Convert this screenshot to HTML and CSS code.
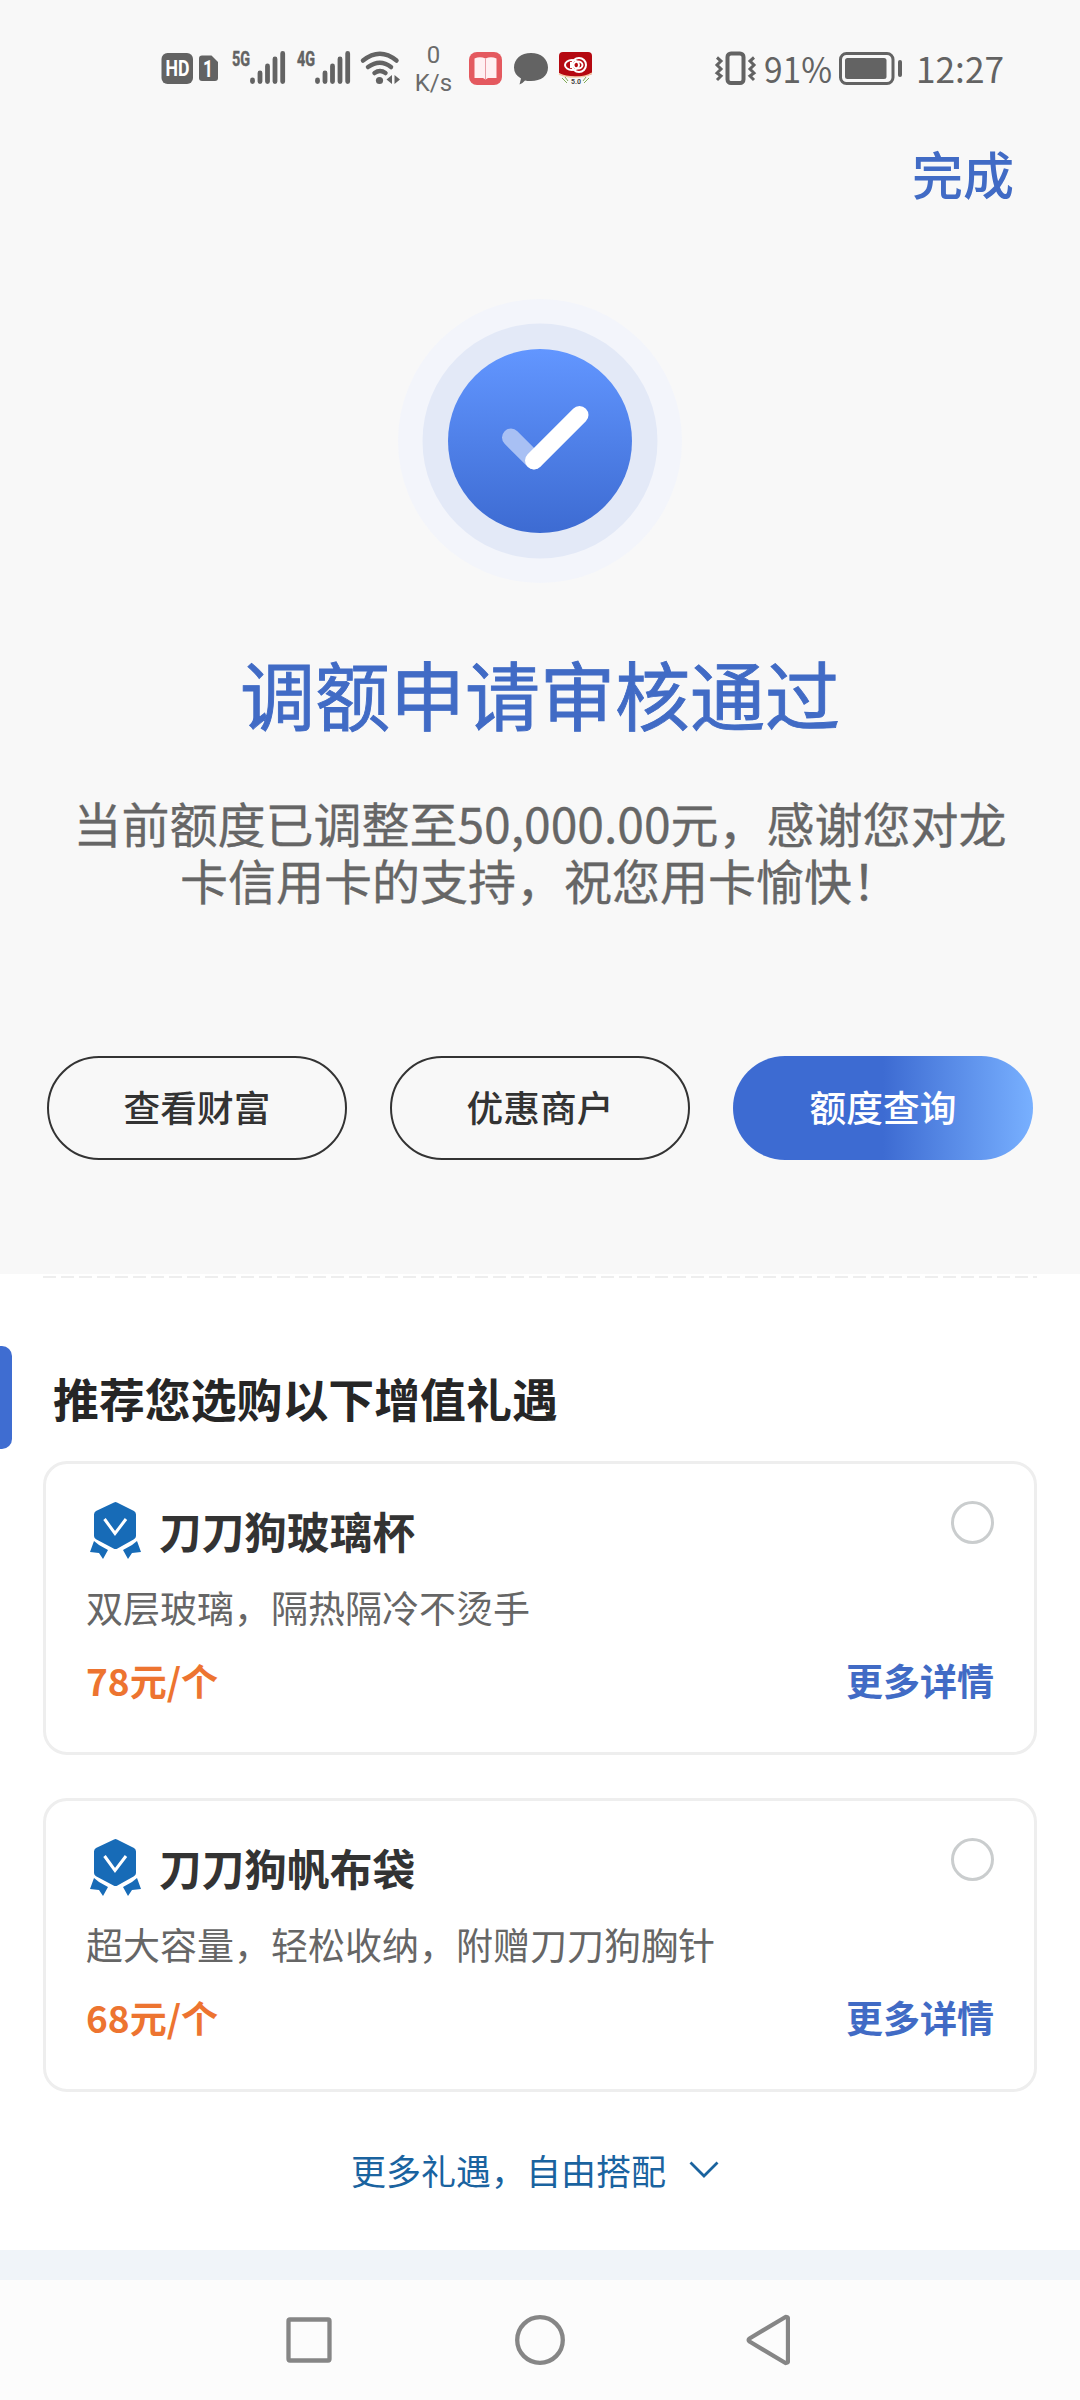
FILE: index.html
```html
<!DOCTYPE html>
<html lang="zh-CN">
<head>
<meta charset="utf-8">
<title>调额申请</title>
<link rel="stylesheet" href="styles.css">
</head>
<body>
<svg width="0" height="0" class="defs">
  <symbol id="medal" viewBox="0 0 51 57">
    <path d="M4 39L9 43L18 48L13 57L9 51L0 50ZM47 39L42 43L33 48L38 57L42 51L51 50Z" fill="#176bb7"/>
    <path d="M24 .5Q25.500 -.3 27 .5L44 9Q46 10 46 12.500V34Q46 36 44 37.300L27.500 46.500Q25.500 47.500 23.500 46.500L6 37.300Q4 36 4 34V12.500Q4 10 6 9Z" fill="#176bb7"/>
    <path d="M14.500 17L25 31.500L36 17" fill="none" stroke="#fff" stroke-width="3"/>
  </symbol>
</svg>
<header class="statusbar">
  <svg class="st-left" width="240" height="60" viewBox="160 38 240 60" fill="#636363">
    <rect x="161.500" y="53" width="31.500" height="31" rx="6"/>
    <text x="165.500" y="76" class="hd" textLength="24" lengthAdjust="spacingAndGlyphs">HD</text>
    <path d="M202 55.500H211.500L218 62V78Q218 81 215 81H202Q199 81 199 78V58.500Q199 55.500 202 55.500Z"/>
    <text x="203" y="77" class="sim" textLength="10" lengthAdjust="spacingAndGlyphs">1</text>
    <text x="232" y="66" class="gen" textLength="18" lengthAdjust="spacingAndGlyphs">5G</text>
    <text x="297" y="66" class="gen" textLength="18" lengthAdjust="spacingAndGlyphs">4G</text>
    <g stroke="#636363" stroke-width="4.800" stroke-linecap="round">
      <path d="M252.500 80V81.500M260 73V81.500M267.500 66V81.500M275 59V81.500M282.700 53.500V81.500"/>
      <path d="M317.500 80V81.500M325 73V81.500M332.500 66V81.500M340 59V81.500M347.700 53.500V81.500"/>
    </g>
    <g fill="none" stroke="#636363" stroke-width="4.500" stroke-linecap="round">
      <path d="M363 60.500Q380 47 396.500 60.500M368 67Q380 58.500 391 67M374.500 73Q380 69 385.500 73"/>
    </g>
    <circle cx="379.500" cy="80.500" r="3.600"/>
    <path d="M392 75V84L386.500 79.500ZM394.500 75V84L400 79.500Z"/>
  </svg>
  <div class="speed"><span>0</span><span>K/s</span></div>
  <svg class="st-apps" width="124" height="44" viewBox="468 46 124 44">
    <rect x="469" y="52" width="33" height="33" rx="8" fill="#e4595f"/>
    <path d="M474.500 58.500Q480 56 485.500 58.500Q491 56 496.500 58.500V78H488L485.500 79.500L483 78H474.500Z" fill="#fff0f2"/>
    <path d="M485.500 58.500V79" stroke="#e99ba4" stroke-width="1"/>
    <path d="M531 53C541 53 548 59 548 67.500S541 81 531 81Q527 81 525 80.500Q523 83 519.500 84.500L521 78.500Q514 74.500 514 67.500C514 59 521 53 531 53Z" fill="#636363"/>
    <path d="M563 52H588Q592 52 592 56V74Q586 77 575 77Q564 77 559 73V56Q559 52 563 52Z" fill="#b50911"/>
    <g fill="none" stroke="#fff" stroke-width="2"><ellipse cx="572" cy="65" rx="7" ry="5"/><circle cx="579" cy="65" r="7"/><ellipse cx="578" cy="65" rx="4.500" ry="3.500"/><path d="M571 62V68"/></g>
    <path d="M559 74Q565 77 575 77Q586 77 592 73" stroke="#f2c9a5" stroke-width="1.500" fill="none"/>
    <text x="571" y="84" class="ver">5.0</text>
    <path d="M562 78L567 83M565 77L568 81M589 78L584 83M586 77L583 81" stroke="#7faa55"/>
  </svg>
  <svg class="st-right" width="292" height="80" viewBox="714 28 292 80" fill="#636363">
    <rect x="727.500" y="53.500" width="16" height="29.500" rx="3.500" fill="none" stroke="#636363" stroke-width="4"/>
    <path d="M717 57.500L721 61L717 65L721 69L717 73L721 76L717 80M754 57.500L750 61L754 65L750 69L754 73L750 76L754 80" fill="none" stroke="#636363" stroke-width="3"/>
    <text x="764" y="83" class="num" textLength="68" lengthAdjust="spacingAndGlyphs">91%</text>
    <rect x="840.500" y="53.500" width="52.500" height="30" rx="6" fill="none" stroke="#636363" stroke-width="3"/>
    <rect x="845" y="58" width="41.500" height="21" rx="2.500"/>
    <rect x="898" y="60" width="4" height="17" rx="2"/>
    <text x="916" y="83" class="num" textLength="88" lengthAdjust="spacingAndGlyphs">12:27</text>
  </svg>
</header>

<main>
  <section class="result">
    <div class="topbar"><a class="done">完成</a></div>
    <svg class="success" width="284" height="284" viewBox="-142 -142 284 284">
      <defs><linearGradient id="blue" x1="0" y1="0" x2="0" y2="1"><stop offset="0" stop-color="#6296ff"/><stop offset="1" stop-color="#3d6bd2"/></linearGradient></defs>
      <circle r="142" fill="#f3f5fb"/>
      <circle r="117.500" fill="#e3e9f7"/>
      <circle r="92" fill="url(#blue)"/>
      <path d="M-29 -3.500L-6 19.500" stroke="#a8c0f4" stroke-width="18" stroke-linecap="round"/>
      <path d="M-6 19.500L39.500 -26" stroke="#fff" stroke-width="18" stroke-linecap="round"/>
    </svg>
    <h1>调额申请审核通过</h1>
    <p class="message">当前额度已调整至50,000.00元，感谢您对龙<br>卡信用卡的支持，祝您用卡愉快！</p>
    <div class="actions">
      <button class="btn">查看财富</button>
      <button class="btn">优惠商户</button>
      <button class="btn primary">额度查询</button>
    </div>
  </section>

  <section class="offers">
    <div class="divider"></div>
    <div class="heading">
      <span class="marker"></span>
      <h2>推荐您选购以下增值礼遇</h2>
    </div>
    <div class="cards">
      <article class="card">
        <div class="card-head">
          <svg class="medal"><use href="#medal"/></svg>
          <h3>刀刀狗玻璃杯</h3>
          <span class="radio"></span>
        </div>
        <p class="desc">双层玻璃，隔热隔冷不烫手</p>
        <div class="card-foot"><span class="price">78元/个</span><a class="detail">更多详情</a></div>
      </article>
      <article class="card">
        <div class="card-head">
          <svg class="medal"><use href="#medal"/></svg>
          <h3>刀刀狗帆布袋</h3>
          <span class="radio"></span>
        </div>
        <p class="desc">超大容量，轻松收纳，附赠刀刀狗胸针</p>
        <div class="card-foot"><span class="price">68元/个</span><a class="detail">更多详情</a></div>
      </article>
    </div>
    <a class="more">更多礼遇，自由搭配
      <svg width="30" height="18" viewBox="0 0 30 18"><path d="M1.500 1.500L15 15L28.500 1.500" fill="none" stroke="#1a639f" stroke-width="2.800"/></svg>
    </a>
  </section>
</main>

<nav class="navbar">
  <svg width="504" height="52" viewBox="286 2314 504 52" fill="none" stroke="#868686" stroke-width="4.300">
    <rect x="288.500" y="2319.500" width="41" height="41" rx="1.500"/>
    <circle cx="540" cy="2340" r="22.800"/>
    <path d="M785.500 2317L749.500 2338.500Q748 2340 749.500 2341.500L785.500 2363Q788 2363 788 2361V2319Q788 2317 785.500 2317Z" stroke-linejoin="round"/>
  </svg>
</nav>
</body>
</html>
```
FILE: styles.css
```css
* { box-sizing: border-box; margin: 0; padding: 0; }
body {
  width: 1080px;
  height: 2400px;
  display: flex;
  flex-direction: column;
  background: #fff;
  font-family: "Noto Sans CJK SC", sans-serif;
  overflow: hidden;
}
svg { display: block; flex: none; }
.defs { position: absolute; }

.statusbar {
  height: 136px;
  flex: none;
  display: flex;
  align-items: center;
  padding-left: 160px;
  background: #f8f8f8;
}
.speed {
  width: 67px;
  display: flex;
  flex-direction: column;
  padding-top: 2px;
  text-align: center;
  font: 24px/28px Roboto, sans-serif;
  color: #6b6b6b;
}
.st-apps { margin-left: 1px; }
.st-right { margin-left: 122px; }
.hd { font: 700 22px Roboto, sans-serif; fill: #fff; }
.sim { font: 700 23px Roboto, sans-serif; fill: #fff; }
.gen { font: 700 20px Roboto, sans-serif; stroke: #636363; stroke-width: .5px; }
.ver { font: 700 7px Roboto, sans-serif; fill: #444; }
.num { font: 36px "Noto Sans CJK SC", sans-serif; }

main { flex: none; }
.result {
  height: 1138px;
  background: #f8f8f8;
  display: flex;
  flex-direction: column;
  align-items: center;
}
.topbar {
  width: 100%;
  height: 163px;
  padding: 7px 66px 0;
  display: flex;
  justify-content: flex-end;
}
.done { font-size: 51px; line-height: 60px; font-weight: 500; color: #416bc5; }
h1 {
  margin-top: 66px;
  font-size: 75px;
  line-height: 88px;
  font-weight: 400;
  color: #416bc5;
  -webkit-text-stroke: .9px #416bc5;
}
.message {
  margin-top: 57px;
  font-size: 48px;
  line-height: 57px;
  text-align: center;
  color: #666;
  white-space: nowrap;
  -webkit-text-stroke: .3px #666;
}
.actions { display: flex; gap: 43px; margin-top: 148px; }
.btn {
  width: 300px;
  height: 104px;
  padding-bottom: 4px;
  border: 2px solid #333;
  border-radius: 52px;
  background: transparent;
  font: 500 36.700px/1 "Noto Sans CJK SC", sans-serif;
  color: #333;
}
.primary {
  border: 0;
  background: linear-gradient(90deg, #3d6bd2 50%, #78b0ff);
  color: #fff;
}

.offers { height: 976px; padding: 2px 43px 0; background: #fff; }
.divider {
  height: 2px;
  background: repeating-linear-gradient(90deg, #eee 0 13px, transparent 13px 18px);
}
.heading {
  display: flex;
  gap: 41px;
  height: 103px;
  margin: 68px 0 12px -43px;
}
.marker { width: 12px; border-radius: 0 10px 10px 0; background: #3f6dd1; }
h2 {
  font-size: 45.900px;
  line-height: 102px;
  font-weight: 700;
  color: #262626;
}
.cards { display: flex; flex-direction: column; gap: 43px; }
.card {
  height: 294px;
  padding: 36px 40px 0 40px;
  border: 3px solid #eee;
  border-radius: 24px;
}
.card-head { display: flex; height: 64px; align-items: flex-start; }
.medal { width: 51px; height: 57px; margin: 2px 18px 0 4px; }
h3 { flex: 1; font-size: 42.700px; line-height: 60px; font-weight: 700; color: #333; }
.radio {
  width: 43px;
  height: 43px;
  margin-top: 1px;
  border: 3px solid #cacdce;
  border-radius: 50%;
}
.desc { margin-top: 15px; font-size: 37px; line-height: 56px; color: #666; }
.card-foot {
  display: flex;
  justify-content: space-between;
  margin-top: 17px;
  font-size: 37px;
  line-height: 56px;
  font-weight: 700;
}
.price { color: #ed7430; }
.detail { color: #416bc5; }
.more {
  display: flex;
  align-items: center;
  justify-content: center;
  gap: 23px;
  margin-top: 53px;
  padding-right: 10px;
  font-size: 35px;
  line-height: 50px;
  color: #1a639f;
}
.navbar {
  flex: none;
  height: 150px;
  border-top: 30px solid #f0f4f9;
  background: #fcfcfc;
  display: flex;
  align-items: center;
  padding-left: 286px;
}
```
